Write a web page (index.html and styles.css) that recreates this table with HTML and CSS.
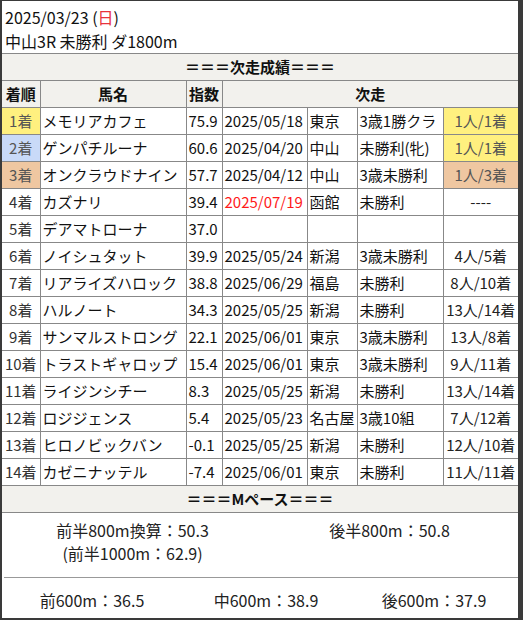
FILE: index.html
```html
<!DOCTYPE html>
<html lang="ja">
<head>
<meta charset="utf-8">
<link rel="stylesheet" href="styles.css">
</head>
<body>
<div class="frame">
  <div class="title">
    <div>2025/03/23 (<span class="sun">日</span>)</div>
    <div>中山3R 未勝利 ダ1800m</div>
  </div>
  <table class="res">
    <colgroup>
      <col class="c1"><col class="c2"><col class="c3"><col class="c4"><col class="c5"><col class="c6"><col class="c7">
    </colgroup>
    <tr class="hd"><th colspan="7">＝＝＝次走成績＝＝＝</th></tr>
    <tr class="hd"><th>着順</th><th>馬名</th><th>指数</th><th colspan="4">次走</th></tr>
    <tr><td class="rk first">1着</td><td>メモリアカフェ</td><td>75.9</td><td>2025/05/18</td><td>東京</td><td>3歳1勝クラ</td><td class="r first">1人/1着</td></tr>
    <tr><td class="rk second">2着</td><td>ゲンパチルーナ</td><td>60.6</td><td>2025/04/20</td><td>中山</td><td>未勝利(牝)</td><td class="r first">1人/1着</td></tr>
    <tr><td class="rk third">3着</td><td>オンクラウドナイン</td><td>57.7</td><td>2025/04/12</td><td>中山</td><td>3歳未勝利</td><td class="r third">1人/3着</td></tr>
    <tr><td class="rk">4着</td><td>カズナリ</td><td>39.4</td><td class="red">2025/07/19</td><td>函館</td><td>未勝利</td><td class="r">----</td></tr>
    <tr><td class="rk">5着</td><td>デアマトローナ</td><td>37.0</td><td></td><td></td><td></td><td class="r"></td></tr>
    <tr><td class="rk">6着</td><td>ノイシュタット</td><td>39.9</td><td>2025/05/24</td><td>新潟</td><td>3歳未勝利</td><td class="r">4人/5着</td></tr>
    <tr><td class="rk">7着</td><td>リアライズハロック</td><td>38.8</td><td>2025/06/29</td><td>福島</td><td>未勝利</td><td class="r">8人/10着</td></tr>
    <tr><td class="rk">8着</td><td>ハルノート</td><td>34.3</td><td>2025/05/25</td><td>新潟</td><td>未勝利</td><td class="r">13人/14着</td></tr>
    <tr><td class="rk">9着</td><td>サンマルストロング</td><td>22.1</td><td>2025/06/01</td><td>東京</td><td>3歳未勝利</td><td class="r">13人/8着</td></tr>
    <tr><td class="rk">10着</td><td>トラストギャロップ</td><td>15.4</td><td>2025/06/01</td><td>東京</td><td>3歳未勝利</td><td class="r">9人/11着</td></tr>
    <tr><td class="rk">11着</td><td>ライジンシチー</td><td>8.3</td><td>2025/05/25</td><td>新潟</td><td>未勝利</td><td class="r">13人/14着</td></tr>
    <tr><td class="rk">12着</td><td>ロジジェンス</td><td>5.4</td><td>2025/05/23</td><td>名古屋</td><td>3歳10組</td><td class="r">7人/12着</td></tr>
    <tr><td class="rk">13着</td><td>ヒロノビックバン</td><td>-0.1</td><td>2025/05/25</td><td>新潟</td><td>未勝利</td><td class="r">12人/10着</td></tr>
    <tr><td class="rk">14着</td><td>カゼニナッテル</td><td>-7.4</td><td>2025/06/01</td><td>東京</td><td>未勝利</td><td class="r">11人/11着</td></tr>
    <tr class="hd"><th colspan="7">＝＝＝Mペース＝＝＝</th></tr>
  </table>
  <div class="pace">
    <div class="half">
      <div>前半800m換算：50.3</div>
      <div>(前半1000m：62.9)</div>
    </div>
    <div class="half">
      <div>後半800m：50.8</div>
    </div>
  </div>
  <div class="thirds">
    <div>前600m：36.5</div>
    <div>中600m：38.9</div>
    <div>後600m：37.9</div>
  </div>
</div>
</body>
</html>
```
FILE: styles.css
```css
html {
  background: #3a3a3a;
}
body {
  margin: 1px 5px 2px 2px;
  font-family: "Noto Sans CJK JP", "Noto Sans", sans-serif;
  font-size: 15px;
  color: #111;
}
.frame {
  width: 516px;
  height: 617px;
  background: #fff;
  display: flex;
  flex-direction: column;
  overflow: hidden;
}
.title {
  padding: 4px 0 0 3px;
  font-size: 16px;
  line-height: 24px;
  height: 48px;
  border-bottom: 1px solid #888;
}
.sun {
  color: #e8323c;
}
.res {
  width: 516px;
  table-layout: fixed;
  border-collapse: collapse;
}
.c1 { width: 38px; }
.c2 { width: 146px; }
.c3 { width: 36px; }
.c4 { width: 85px; }
.c5 { width: 50px; }
.c6 { width: 86px; }
.c7 { width: 75px; }
.res th, .res td {
  border: 1px solid #888;
  padding: 0 2px;
  line-height: 26px;
  height: 26px;
  white-space: nowrap;
  overflow: hidden;
  text-align: left;
}
.res tr:first-child th {
  border-top: none;
}
.res th:first-child, .res td:first-child {
  border-left: none;
}
.res th:last-child, .res td:last-child {
  border-right: none;
}
.res .hd th {
  background: #f2f1ed;
  text-align: center;
  font-weight: bold;
}
.res td.rk {
  text-align: center;
  padding: 0;
  color: #333;
}
.res td.r {
  text-align: center;
  color: #222;
}
.res td.first {
  background: #fff07f;
  color: #555;
}
.res td.second {
  background: #c9daf8;
  color: #555;
}
.res td.third {
  background: #efc7a1;
  color: #555;
}
.res td.red {
  color: #ff1a1a;
}
.pace {
  display: flex;
  padding-top: 6px;
  height: 58px;
  font-size: 16px;
  line-height: 23px;
  color: #222;
  border-bottom: 1px solid #999;
  margin-left: 2px;
}
.half {
  flex: 1;
  display: flex;
  flex-direction: column;
  align-items: center;
}
.thirds {
  display: flex;
  padding-top: 11px;
  font-size: 16px;
  line-height: 23px;
  color: #222;
}
.thirds div {
  flex: 1;
  text-align: center;
}
.thirds div:first-child {
  flex: 0 0 180px;
}
```
